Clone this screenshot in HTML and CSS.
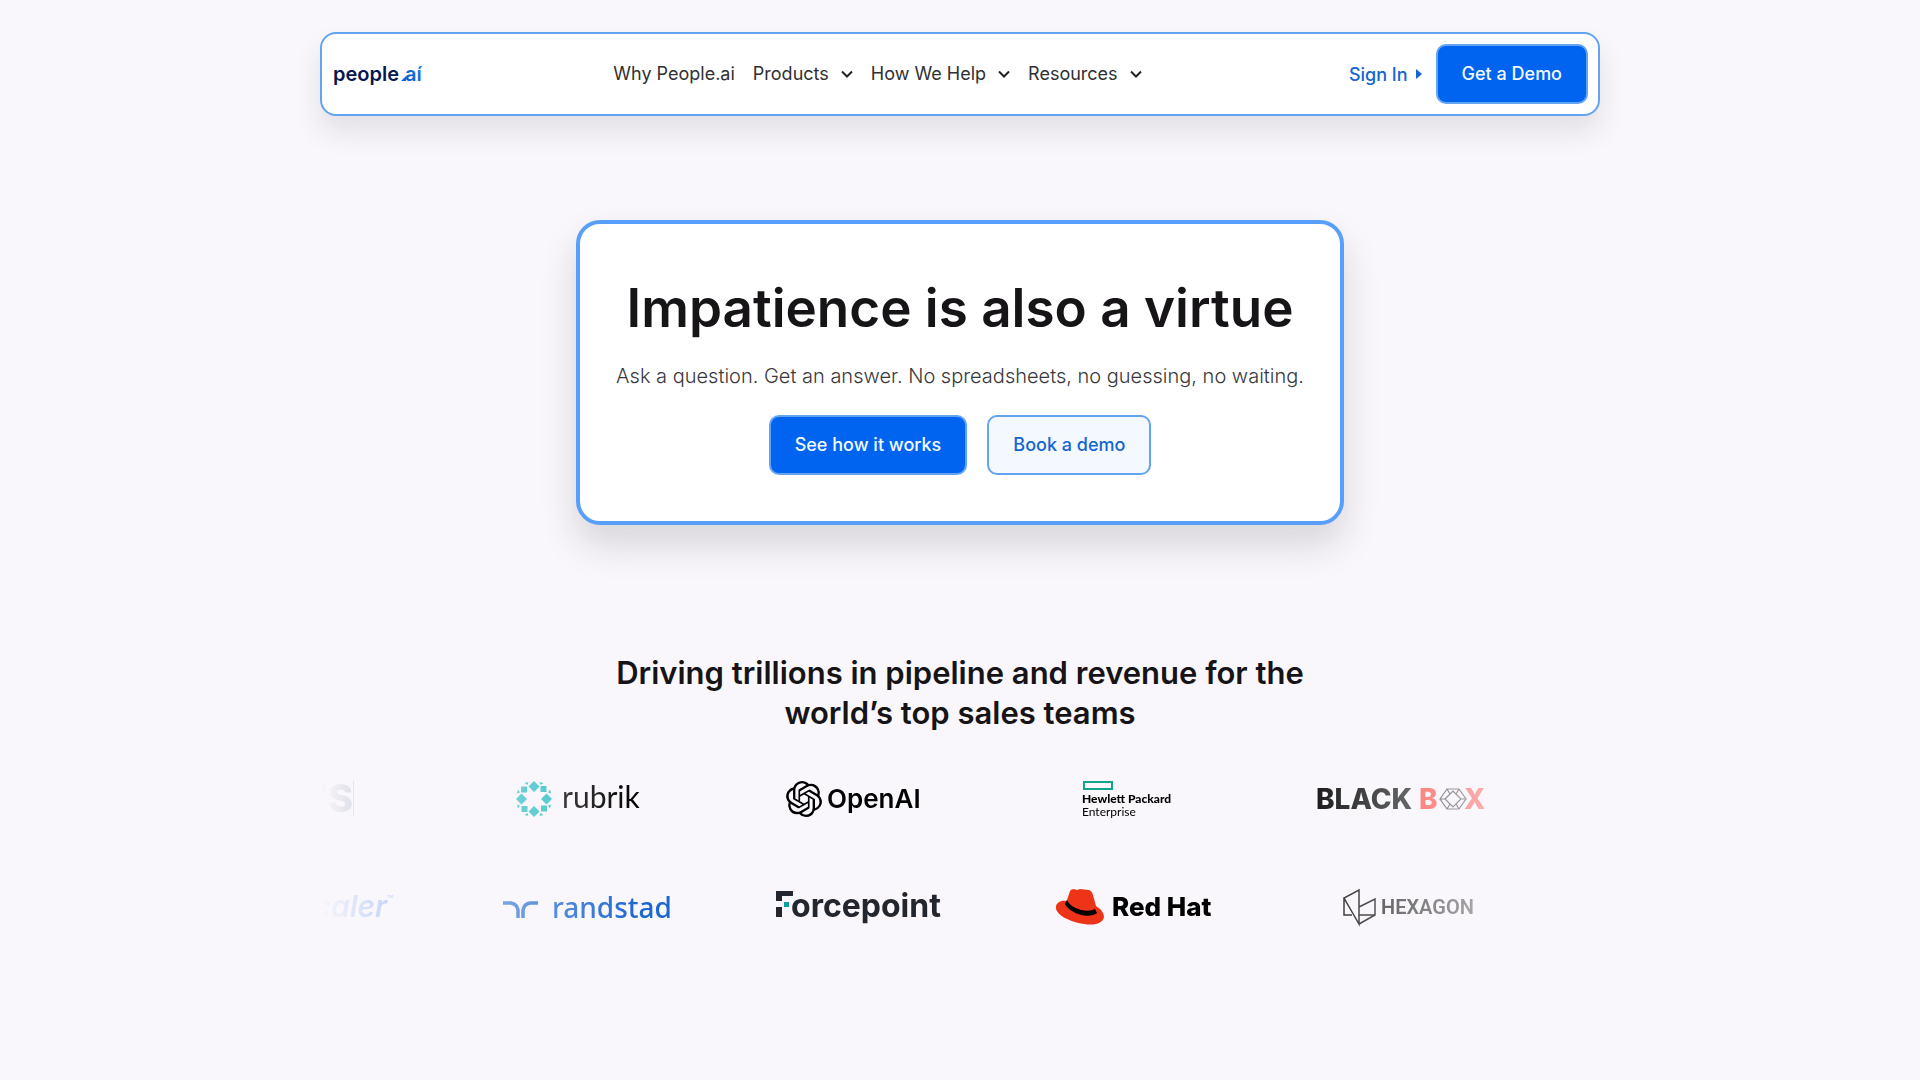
FILE: index.html
```html
<!DOCTYPE html>
<html lang="en">
<head>
    <meta charset="UTF-8">
    <meta name="viewport" content="width=device-width, initial-scale=1.0">
    <title>People.ai</title>
    <link rel="stylesheet" href="styles.css">
</head>
<body>
    <!-- Top navigation -->
    <header class="header">
        <a href="#" class="brand" aria-label="people.ai home">
            <svg width="92" height="32" viewBox="0 0 92 32">
                <defs>
                    <linearGradient id="brandBlue" x1="0" y1="1" x2="1" y2="0">
                        <stop offset="0" stop-color="#0052c8"/>
                        <stop offset="1" stop-color="#1f83f0"/>
                    </linearGradient>
                </defs>
                <text x="1" y="23" class="brand-name">people</text>
                <path d="M69 23l5-5v5z" fill="#0a6be0"/>
                <text x="73" y="23" class="brand-name" fill="url(#brandBlue)">aí</text>
            </svg>
        </a>
        <nav class="nav">
            <a href="#">Why People.ai</a>
            <button type="button">Products <svg class="chevron" viewBox="0 0 12 8"><path d="M1 1.500l5 5 5-5"/></svg></button>
            <button type="button">How We Help <svg class="chevron" viewBox="0 0 12 8"><path d="M1 1.500l5 5 5-5"/></svg></button>
            <button type="button">Resources <svg class="chevron" viewBox="0 0 12 8"><path d="M1 1.500l5 5 5-5"/></svg></button>
        </nav>
        <div class="actions">
            <a href="#" class="sign-in">Sign In <svg width="6" height="10" viewBox="0 0 6 10"><path d="M0 0l6 5-6 5z" fill="#1565d0"/></svg></a>
            <a href="#" class="btn btn-primary">Get a Demo</a>
        </div>
    </header>

    <main>
        <!-- Hero card -->
        <section class="hero">
            <h1>Impatience is also a virtue</h1>
            <p>Ask a question. Get an answer. No spreadsheets, no guessing, no waiting.</p>
            <div class="hero-buttons">
                <a href="#" class="btn btn-primary">See how it works</a>
                <a href="#" class="btn btn-secondary">Book a demo</a>
            </div>
        </section>

        <!-- Customer logos -->
        <section class="customers">
            <h2>Driving trillions in pipeline and revenue for the world’s top sales teams</h2>
            <div class="marquee">
                <div class="track">
                    <svg class="logo" viewBox="0 0 180 72">
                        <text x="139" y="49" class="logo-s" text-anchor="end">’S</text>
                        <path d="M139.500 18v35" stroke="#3d5673"/>
                    </svg>
                    <svg class="logo" viewBox="0 0 180 72" role="img" aria-label="rubrik">
                        <defs>
                            <g id="rubrikArm">
                                <path d="M0-18l5.500 5.500L0-7l-5.500-5.500z"/>
                                <path d="M6.500-13h6v6h-6z"/>
                                <path d="M5.500-17l4 1-3 2zM17-5.500l-1-4-2 3z"/>
                            </g>
                        </defs>
                        <g transform="translate(46 36)" fill="#18b8bd">
                            <use href="#rubrikArm"/>
                            <use href="#rubrikArm" transform="rotate(90)"/>
                            <use href="#rubrikArm" transform="rotate(180)"/>
                            <use href="#rubrikArm" transform="rotate(270)"/>
                        </g>
                        <text x="74" y="45" class="logo-rubrik">rubrik</text>
                    </svg>
                    <svg class="logo" viewBox="0 0 180 72" role="img" aria-label="OpenAI">
                        <path transform="translate(24 18) scale(1.500)" d="M22.282 9.821a5.985 5.985 0 0 0-.516-4.910 6.046 6.046 0 0 0-6.510-2.900A6.065 6.065 0 0 0 4.981 4.182a5.985 5.985 0 0 0-3.998 2.900 6.046 6.046 0 0 0 .743 7.097 5.980 5.980 0 0 0 .511 4.911 6.051 6.051 0 0 0 6.515 2.900A5.985 5.985 0 0 0 13.260 24a6.056 6.056 0 0 0 5.772-4.206 5.990 5.990 0 0 0 3.998-2.900 6.056 6.056 0 0 0-.748-7.073zM13.260 22.430a4.476 4.476 0 0 1-2.876-1.041l.141-.080 4.779-2.758a.795.795 0 0 0 .392-.681v-6.737l2.020 1.169a.071.071 0 0 1 .038.052v5.583a4.504 4.504 0 0 1-4.494 4.493zM3.600 18.304a4.471 4.471 0 0 1-.535-3.014l.142.085 4.783 2.759a.771.771 0 0 0 .781 0l5.843-3.369v2.332a.080.080 0 0 1-.033.062L9.740 19.950a4.499 4.499 0 0 1-6.140-1.646zM2.341 7.896a4.485 4.485 0 0 1 2.365-1.973v5.678a.766.766 0 0 0 .388.676l5.815 3.355-2.020 1.168a.076.076 0 0 1-.071 0l-4.830-2.786A4.504 4.504 0 0 1 2.341 7.872zm16.596 3.856l-5.833-3.387 2.015-1.164a.076.076 0 0 1 .071 0l4.830 2.791a4.494 4.494 0 0 1-.676 8.105v-5.678a.790.790 0 0 0-.407-.667zm2.011-3.023l-.142-.085-4.774-2.782a.776.776 0 0 0-.785 0L9.409 9.230V6.897a.066.066 0 0 1 .028-.061l4.830-2.787a4.499 4.499 0 0 1 6.681 4.660zM8.307 12.863l-2.020-1.164a.080.080 0 0 1-.038-.057V6.074a4.499 4.499 0 0 1 7.376-3.454l-.142.081-4.779 2.758a.795.795 0 0 0-.392.681zm1.097-2.365l2.602-1.500 2.607 1.500v2.999l-2.597 1.500-2.607-1.500z"/>
                        <text x="65" y="45" class="logo-openai">OpenAI</text>
                    </svg>
                    <svg class="logo" viewBox="0 0 180 72" role="img" aria-label="Hewlett Packard Enterprise">
                        <path d="M48 19h28v7H48z" fill="none" stroke="#12a58c" stroke-width="2"/>
                        <text x="46" y="40" class="logo-hpe">Hewlett Packard</text>
                        <text x="46" y="53" class="logo-hpe-sub">Enterprise</text>
                    </svg>
                    <svg class="logo" viewBox="0 0 180 72" role="img" aria-label="Black Box">
                        <text x="6" y="46" class="logo-blackbox">BLACK</text>
                        <text x="109" y="46" class="logo-blackbox" fill="#ff2d23">B</text>
                        <path d="M130 36l7-10h12l7 10-7 10h-12zM135 36l8-8 8 8-8 8zM130 36h5M151 36h5M137 26l3 5M149 26l-3 5M137 46l3-5M149 46l-3-5" fill="none" stroke="#222" stroke-width="1.200"/>
                        <text x="154" y="46" class="logo-blackbox" fill="#ff2d23">X</text>
                    </svg>
                </div>
            </div>
            <div class="marquee">
                <div class="track">
                    <svg class="logo" viewBox="0 0 180 72" role="img" aria-label="zscaler">
                        <text x="173" y="46" class="logo-zscaler" text-anchor="end">zscaler</text>
                        <text x="173" y="32" class="logo-tm">™</text>
                    </svg>
                    <svg class="logo" viewBox="0 0 180 72" role="img" aria-label="randstad">
                        <path d="M15 32h8q6 1 7 7v8M50 32h-8q-6 1-7 7v8" fill="none" stroke="#1b66d2" stroke-width="3.500"/>
                        <text x="64" y="47" class="logo-randstad">randstad</text>
                    </svg>
                    <svg class="logo" viewBox="0 0 180 72" role="img" aria-label="Forcepoint">
                        <!-- block mark in front of the wordmark -->
                        <path d="M14 20h17v5H20v5h-6zM14 36h6v10h-6z" fill="#23262e"/>
                        <path d="M22 31h5v5h-5z" fill="#0c9f9f"/>
                        <text x="29" y="46" class="logo-forcepoint">orcepoint</text>
                    </svg>
                    <svg class="logo" viewBox="0 0 180 72" role="img" aria-label="Red Hat">
                        <path d="M31 29l3-9q1-2 4-2l3 1 3-1 9 1q3 1 4 5l3 11q8 5 8 11c-1 6-9 9-20 7C33 51 19 43 20 36c0-4 5-7 10-6z" fill="#ee3418"/>
                        <path d="M31 29q3 7 14 10 9 2 14-1l2 4q-5 4-16 2-13-4-16-11z"/>
                        <text x="76" y="45" class="logo-redhat">Red Hat</text>
                    </svg>
                    <svg class="logo" viewBox="0 0 180 72" role="img" aria-label="Hexagon">
                        <path d="M49 19v34L34 27zM34 27v17h8M49 36l16-8v16L49 53M49 44h16" fill="none" stroke="#111" stroke-width="1.500"/>
                        <text x="71" y="43" class="logo-hexagon">HEXAGON</text>
                    </svg>
                </div>
            </div>
        </section>
    </main>
</body>
</html>
```
FILE: styles.css
```css
* {
    box-sizing: border-box;
}
body {
    margin: 0;
    padding: 32px 20px;
    background-color: #f9f7fb;
    color: #161417;
    font-family: Inter, sans-serif;
}
a {
    text-decoration: none;
}

/* Header */
.header {
    display: flex;
    align-items: center;
    justify-content: space-between;
    max-width: 1280px;
    margin: 0 auto;
    padding: 10px;
    background-color: #fff;
    border: 2px solid #62a4f2;
    border-radius: 16px;
    box-shadow: 0 16px 28px rgba(30, 25, 30, 0.1);
}
.brand {
    display: flex;
}
.brand-name {
    font-size: 20px;
    font-weight: 600;
}
.brand text:first-of-type {
    fill: #07174f;
}
.nav {
    display: flex;
    gap: 18px;
    margin-right: 18px;
}
.nav a,
.nav button {
    display: flex;
    align-items: center;
    gap: 12px;
    padding: 0;
    border: none;
    background: none;
    color: #303034;
    font-family: inherit;
    font-size: 18px;
    line-height: 24px;
    cursor: pointer;
}
.chevron {
    width: 12px;
    height: 8px;
    fill: none;
    stroke: #222;
    stroke-width: 2;
}
.actions {
    display: flex;
    align-items: center;
    gap: 14px;
}
.sign-in {
    display: flex;
    align-items: center;
    gap: 8px;
    color: #1565d0;
    font-size: 18px;
    font-weight: 500;
}

/* Buttons */
.btn {
    padding: 16px 24px;
    border: 2px solid #62a4f2;
    border-radius: 10px;
    font-size: 18px;
    font-weight: 500;
    line-height: 24px;
}
.btn-primary {
    background-color: #0064f0;
    color: #f0faff;
}
.btn-secondary {
    background-color: #f3f9ff;
    color: #1565d0;
}

/* Hero */
.hero {
    max-width: 768px;
    margin: 104px auto 0;
    padding: 48px 20px 46px;
    background-color: #fff;
    border: 4px solid #579ffa;
    border-radius: 24px;
    box-shadow: 0 20px 36px rgba(30, 25, 30, 0.15);
    text-align: center;
}
.hero h1 {
    margin: 0;
    font-size: 53px;
    font-weight: 600;
    line-height: 72px;
}
.hero p {
    margin: 16px 0 23px;
    color: #39383c;
    font-size: 20px;
    font-weight: 300;
    line-height: 32px;
}
.hero-buttons {
    display: flex;
    justify-content: center;
    gap: 20px;
}

/* Customer logos */
.customers {
    max-width: 1280px;
    margin: 128px auto 0;
}
.customers h2 {
    max-width: 768px;
    margin: 0 auto 30px;
    font-size: 31px;
    font-weight: 600;
    line-height: 40px;
    text-align: center;
}
.marquee {
    margin-bottom: 36px;
    overflow: hidden;
    -webkit-mask-image: linear-gradient(to right, transparent, #000 25%, #000 75%, transparent);
    mask-image: linear-gradient(to right, transparent, #000 25%, #000 75%, transparent);
}
.track {
    display: flex;
    gap: 94px;
    margin-left: -106px; /* scroll position of the strip */
}
.logo {
    flex: none;
    width: 180px;
    height: 72px;
    overflow: visible;
}
.logo-s {
    fill: #0b2a4d;
    font-size: 38px;
    font-weight: 800;
}
.logo-rubrik {
    font-family: Lato, sans-serif;
    font-size: 30px;
}
.logo-openai {
    font-size: 26px;
    font-weight: 600;
}
.logo-hpe {
    font-family: Lato, sans-serif;
    font-size: 12px;
    font-weight: 900;
}
.logo-hpe-sub {
    font-family: Lato, sans-serif;
    font-size: 12px;
}
.logo-blackbox {
    font-size: 28px;
    font-weight: 800;
}
.logo-zscaler {
    fill: #0a5cf0;
    font-size: 30px;
    font-style: italic;
    font-weight: 600;
}
.logo-tm {
    fill: #0a5cf0;
    font-size: 10px;
}
.logo-randstad {
    fill: #1b66d2;
    font-family: "Noto Sans", sans-serif;
    font-size: 28px;
    font-weight: 500;
}
.logo-forcepoint {
    fill: #23262e;
    font-size: 32px;
    font-weight: 700;
}
.logo-redhat {
    font-size: 26px;
    font-weight: 800;
}
.logo-hexagon {
    fill: #222;
    font-family: Roboto, sans-serif;
    font-size: 20px;
    font-weight: 600;
}
```
